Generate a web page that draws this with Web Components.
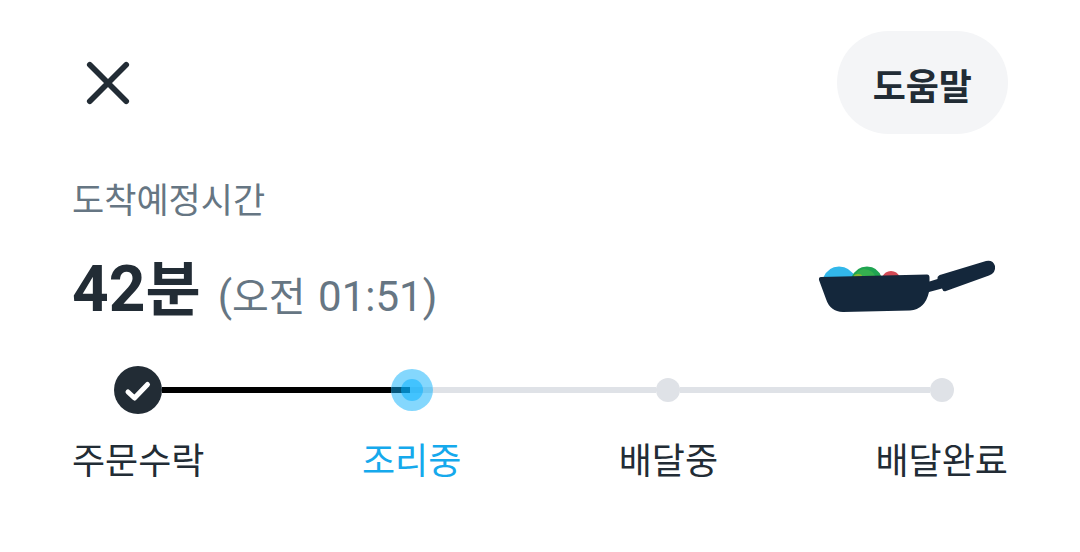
<!DOCTYPE html>
<html lang="ko">
<head>
<meta charset="utf-8">
<meta name="viewport" content="width=device-width, initial-scale=1">
<title>주문 상태</title>
<style>
body{margin:0;background:#fff;color:#222c35;font-family:Roboto,"Noto Sans CJK KR",sans-serif}
</style>
</head>
<body>
<order-status></order-status>
<script>
const define = (name, html) => customElements.define(name, class extends HTMLElement {
  connectedCallback() {
    if (this.shadowRoot) return;
    const t = document.createElement('template');
    t.innerHTML = html;
    this.attachShadow({mode: 'open'}).append(t.content.cloneNode(true));
  }
});

define('status-header', `
<style>
:host{display:flex;justify-content:space-between;align-items:center}
button{border:0;padding:0;background:none;color:inherit;font:inherit;cursor:pointer}
.close{width:72px;height:72px;display:grid;place-items:center}
.help{padding:31px 36px 20px;border-radius:52px;background:#f4f5f7;font-size:36px;line-height:52px;font-weight:700}
svg{display:block}
</style>
<button class="close" aria-label="닫기"><svg width="48" height="48" viewBox="0 0 48 48" fill="none" stroke="#222c35" stroke-width="5.700" stroke-linecap="round"><path d="M5.800 5.800 42.200 42.200M42.200 5.800 5.800 42.200"/></svg></button>
<button class="help"><slot></slot></button>`);

define('frying-pan', `
<style>:host{display:block}svg{display:block}</style>
<svg width="180" height="56" viewBox="0 0 180 56" role="img" aria-label="프라이팬">
<path d="M7 21Q12 9.500 23 9.500T40 21Z" fill="#32b7ea"/>
<path d="M35 21Q40 9.500 51 9.500T66 21Z" fill="#1fa451"/>
<path d="M39 21Q40 13 48 12Q58 13 60 21Z" fill="#35b04f"/>
<ellipse cx="42" cy="19" rx="4" ry="2" fill="#8ab82f"/>
<path d="M66 20Q69 14 75 14T84 20Z" fill="#d34a55"/>
<path d="M5 20 111 17.500q2.500 0 2.500 3v4l8-2.500v-1q0-2.500 4-3.500L170 4q7-1.500 9 5 1 7-6 9.500L130 34q-3 1-4-2.500l-13 3.500Q109 52.500 94 53.500L27 55Q14 54.500 10 42L3 23q-.5-3 2-3Z" fill="#14273b"/>
</svg>`);

define('arrival-time', `
<style>
:host{display:block}
h1,p{margin:0;font-weight:400}
h1{font-size:35px;line-height:52px;color:#667683}
p{display:flex;align-items:baseline;gap:17px;line-height:96px}
strong{font-size:64px;font-weight:700}
.row{display:flex;justify-content:space-between;align-items:center;margin-top:14px}
.clock{font-size:42px;color:#667683}
.art{margin:0 12px 18px 0}
</style>
<h1><slot></slot></h1>
<div class="row"><p><strong><slot name="left"></slot></strong><span class="clock"><slot name="clock"></slot></span></p>
<frying-pan class="art"></frying-pan></div>`);

define('status-step', `
<style>
:host{display:grid;grid-template-columns:1fr;--before:#dfe2e7;--after:#dfe2e7}
:host([state=done]){--after:#000}
:host([state=active]){--before:#000;color:#15a9ec}
.line{height:6px}
.l{background:var(--before)}.r{background:var(--after)}
:host([first]) .l,:host([last]) .r{background:none}
.track{display:grid;grid-template-columns:1fr auto 1fr;height:48px;align-items:center}
.dot{display:grid;place-items:center;width:24px;height:24px;border-radius:50%;background:#dfe2e7}
:host([state=done]) .dot{width:48px;height:48px;background:#222c35}
:host([state=active]) .dot{width:42px;height:42px;background:linear-gradient(90deg,#000 46%,#dfe2e7 46%) center/100% 6px no-repeat}
.halo{display:none}
:host([state=active]) .halo{display:grid;place-items:center;width:42px;height:42px;border-radius:50%;background:rgba(10,176,252,.5)}
.core{width:22px;height:22px;border-radius:50%;background:rgba(0,176,255,.5)}
svg{display:none}
:host([state=done]) svg{display:block}
.label{font-size:36px;line-height:52px;margin-top:22px;white-space:nowrap}
</style>
<div class="track"><i class="line l"></i><span class="dot"><span class="halo"><i class="core"></i></span>
<svg width="48" height="48" viewBox="0 0 48 48" fill="none" stroke="#fff" stroke-width="5" stroke-linecap="round" stroke-linejoin="round"><path d="m14 26 6.500 6L33.500 18.500"/></svg></span><i class="line r"></i></div>
<span class="label"><slot></slot></span>`);

define('status-link', `<style>:host{display:block;flex:1;height:6px;margin-top:21px;background:#dfe2e7}:host([done]){background:#000}</style>`);

define('status-progress', `<style>:host{display:flex;align-items:flex-start}</style><slot></slot>`);

define('order-status', `
<style>
:host{display:block;padding:31px 72px 64px}
arrival-time{margin-top:42px}
status-progress{margin-top:20px}
.unit{font-size:60px}
.half{font-size:40px;margin-right:2px}
</style>
<status-header>도움말</status-header>
<arrival-time>도착예정시간<span slot="left">42<span class="unit">분</span></span><span slot="clock">(<span class="half">오전</span> 01:51)</span></arrival-time>
<status-progress>
<status-step state="done" first>주문수락</status-step><status-link done></status-link>
<status-step state="active">조리중</status-step><status-link></status-link>
<status-step>배달중</status-step><status-link></status-link>
<status-step last>배달완료</status-step>
</status-progress>`);
</script>
</body>
</html>
